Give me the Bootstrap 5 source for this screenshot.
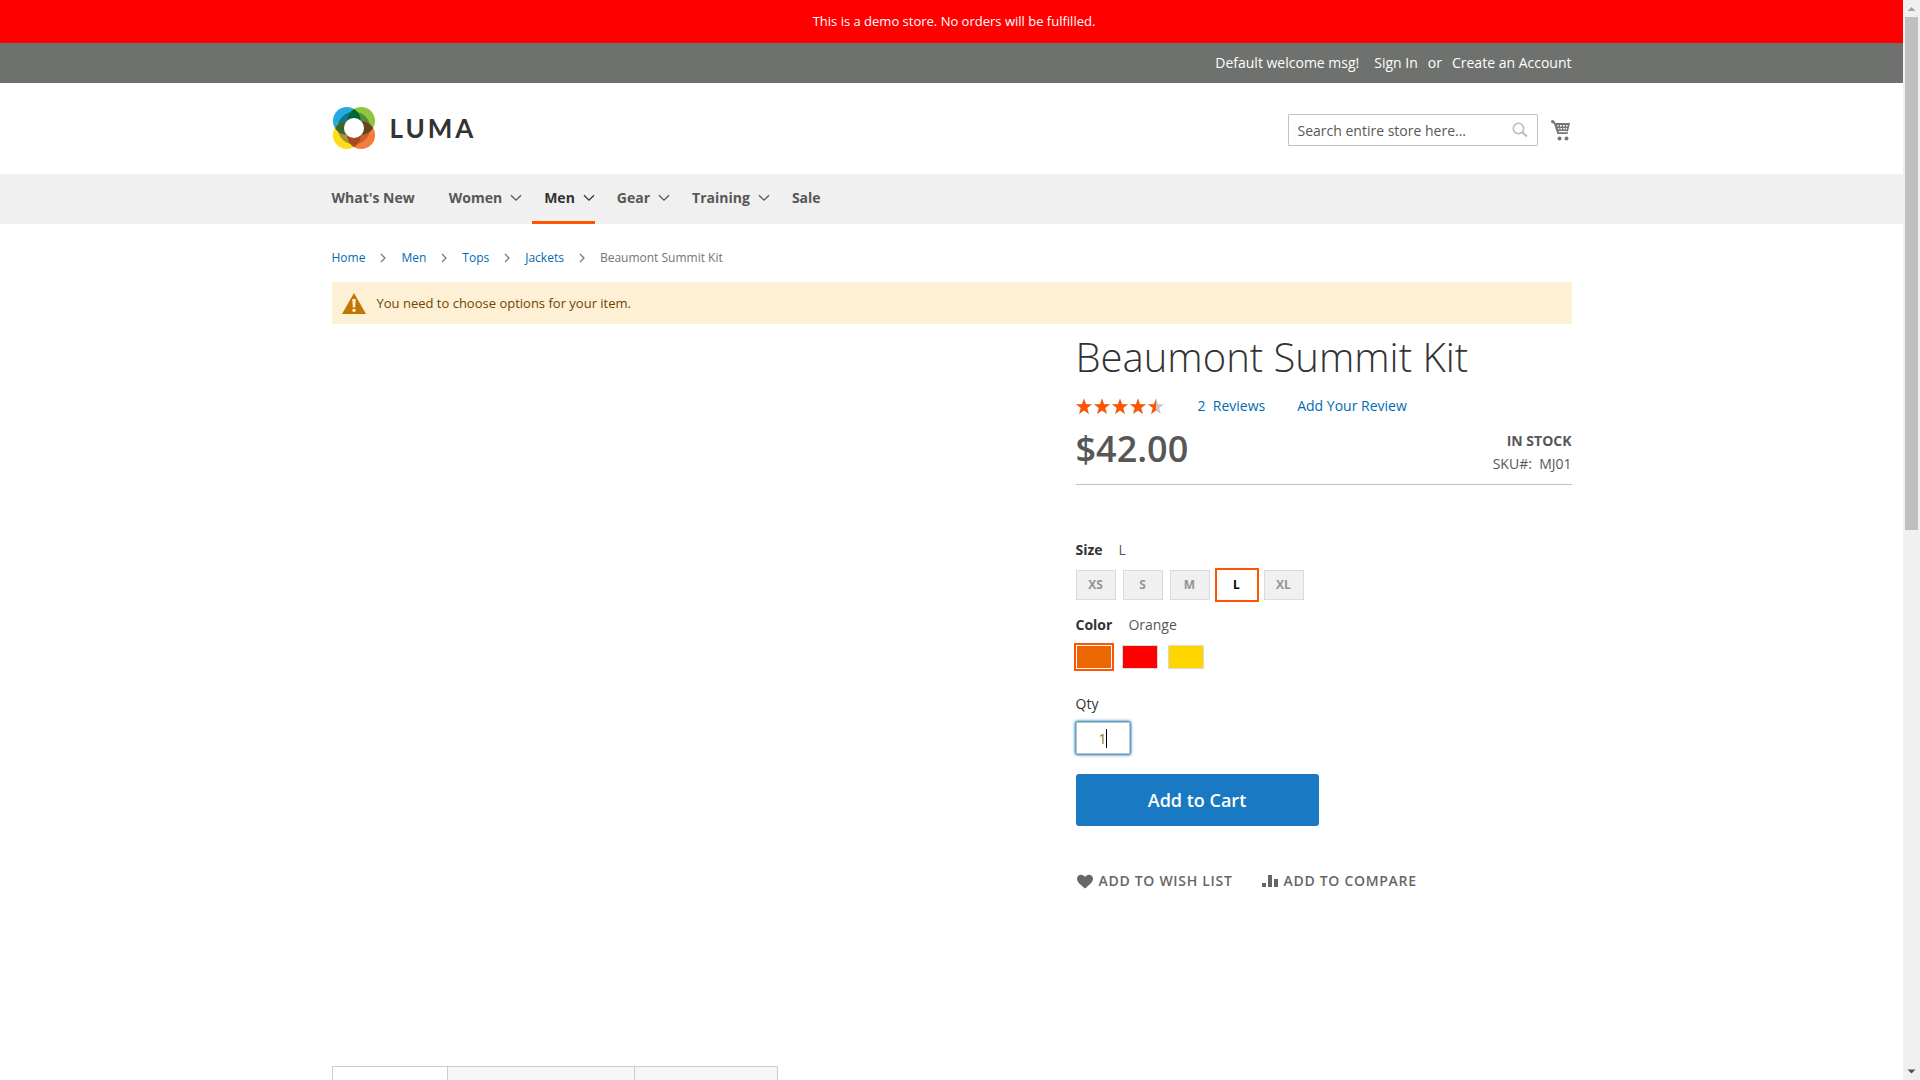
<!DOCTYPE html>
<html lang="en">
<head>
<meta charset="utf-8">
<meta name="viewport" content="width=device-width, initial-scale=1">
<title>Beaumont Summit Kit</title>
<link href="https://cdn.jsdelivr.net/npm/bootstrap@5.3.0/dist/css/bootstrap.min.css" rel="stylesheet">
<style>
body{font-family:"Open Sans","Noto Sans",sans-serif;font-size:14px;line-height:20px;color:#575757;background:#fff}
a{color:#006bb4;text-decoration:none}
.page-main{min-width:0;overflow:hidden}
.wrap{width:100%;max-width:1280px;margin:0 auto;padding:0 20px}
.demo-bar{background:#f00;color:#fff;font-size:13px;line-height:19px;padding:12px 0 12px 5px}
.account-bar{background:#6e716e;color:#fff;padding:10px 0}
.account-bar,.account-bar a{color:#fff}
.account-bar .wrap{gap:10px}
.welcome{margin-right:5px}
.site-head{padding:23px 0 20px}
.brand-word{font-family:Lato,sans-serif;font-weight:700;font-size:26px;line-height:32px;letter-spacing:3px;color:#333}
.brand-link{gap:14px}
.head-tools{gap:13px;padding-right:2px}
.search-box{width:250px}
.search-box input{height:32px;border:1px solid #c2c2c2;border-radius:1px;padding:0 35px 0 9px;font-size:14px;color:#575757}
.search-box input::placeholder{color:#575757;opacity:1}
.search-box button{right:10px;top:8px;line-height:0}
.main-nav{background:#f0f0f0}
.main-nav .nav{gap:10px;margin-left:-12px}
.main-nav a{display:flex;align-items:center;gap:8px;height:50px;padding:0 12px;color:#575757;font-weight:700;border-bottom:3px solid transparent}
.main-nav a.has-menu{padding-right:0}
.main-nav a.current{color:#333;border-color:#ff5501}
.crumbs{font-size:12px;line-height:18px;padding:25px 0 15px;color:#757575}
.crumbs svg{margin:0 15px}
.notice{background:#fdf0d5;color:#6f4400;font-size:13px;line-height:18px;padding:10px;gap:11px;height:42px}
.gallery{width:60%;min-height:702px}
.info{width:40%}
.info h1{font-weight:300;font-size:40px;line-height:44px;color:#333;margin:11px 0 17px}
.price{font-size:36px;line-height:36px;font-weight:600;padding-top:6px}
.price-row{border-bottom:1px solid #c1c1c1;padding:9px 0}
.stock{line-height:23px}
.choices{margin-top:55px}
.opt-name{font-weight:700;color:#333}
.opt-row{gap:7px;margin:10px 0 15px}
.size-opt{width:40px;height:30px;padding:0;border:1px solid #dadada;background:#f0f0f0;color:#949494;font-size:12px;line-height:20px;font-weight:700}
.size-opt.chosen{background:#fff;border-color:#fff;outline:2px solid #ff5501;color:#000}
.color-row{gap:10px;margin:10px 0 25px}
.color-opt{width:36px;height:24px;padding:0;border:1px solid #dadada}
.color-opt.chosen{border-color:#fff;outline:2px solid #ff5501}
.c-orange{background:#eb6703}.c-red{background:#f00}.c-yellow{background:#ffd500}
.qty-label{color:#333;font-weight:400}
.qty-box{width:54px;margin:8px 0 20px}
.qty-box input{height:32px;border:1px solid #c2c2c2;border-radius:1px;padding:0;text-align:center;font-size:14px;color:#8a6d1c;box-shadow:0 0 3px 1px #006bb4}
.caret{left:30px;top:7px;width:1px;height:19px;background:#000}
.add-cart{width:49%;height:52px;background:#1979c3;color:#fff;border:0;border-radius:3px;font-size:18px;font-weight:600}
.extras{margin-top:45px;gap:28px}
.extras a{gap:5px;color:#666;font-weight:600;letter-spacing:.05em}
.tab-strip{margin-top:40px}
.tab-strip button{height:40px;border:1px solid #ccc;border-right:0;background:#f6f6f6;padding:0}
.tab-strip button:first-child{width:115px;background:#fff}
.tab-strip button:nth-child(2){width:187px}
.tab-strip button:last-child{width:144px;border-right:1px solid #ccc}
.side-scroll{width:17px;background:#f0f0f0}
.side-scroll .rail{padding:0 2px}
.side-scroll .thumb{background:#bfbfbf}
</style>
<script src="https://cdn.jsdelivr.net/npm/bootstrap@5.3.0/dist/js/bootstrap.bundle.min.js"></script>
</head>
<body>
<svg class="d-none">
<symbol id="chev" viewBox="0 0 12 8"><path d="M1 1.200l5 5 5-5" fill="none" stroke="currentColor" stroke-width="1.300"/></symbol>
<symbol id="next" viewBox="0 0 6 10"><path d="M1 1l4 4-4 4" fill="none" stroke="currentColor" stroke-width="1.200"/></symbol>
</svg>
<div class="d-flex vh-100 overflow-hidden">
<div class="page-main flex-grow-1">
<div class="demo-bar text-center">This is a demo store. No orders will be fulfilled.</div>
<header>
<div class="account-bar"><div class="wrap d-flex justify-content-end"><span class="welcome">Default welcome msg!</span><a href="#">Sign In</a><span>or</span><a href="#">Create an Account</a></div></div>
<div class="site-head"><div class="wrap d-flex align-items-center justify-content-between">
<a href="#" class="brand-link d-flex align-items-center pb-1" aria-label="Luma home">
<svg width="44" height="44" viewBox="0 0 46 46">
<circle cx="15.500" cy="15.500" r="14.500" fill="#27a9e1"/><circle cx="30.500" cy="15.500" r="14.500" fill="#8dc63f"/><circle cx="15.500" cy="30.500" r="14.500" fill="#ffde17"/><circle cx="30.500" cy="30.500" r="14.500" fill="#f47b3c"/>
<clipPath id="k1"><circle cx="15.500" cy="15.500" r="14.500"/></clipPath><clipPath id="k2"><circle cx="30.500" cy="15.500" r="14.500"/></clipPath><clipPath id="k3"><circle cx="15.500" cy="30.500" r="14.500"/></clipPath><clipPath id="k4"><circle cx="30.500" cy="30.500" r="14.500"/></clipPath>
<circle cx="23" cy="23" r="17" fill="#0f729b" clip-path="url(#k1)"/><circle cx="23" cy="23" r="17" fill="#558b3c" clip-path="url(#k2)"/><circle cx="23" cy="23" r="17" fill="#a99334" clip-path="url(#k3)"/><circle cx="23" cy="23" r="17" fill="#c7602f" clip-path="url(#k4)"/>
<g clip-path="url(#k1)"><circle cx="30.500" cy="15.500" r="14.500" fill="#006838"/><circle cx="15.500" cy="30.500" r="14.500" fill="#3a662e"/></g>
<g clip-path="url(#k4)"><circle cx="30.500" cy="15.500" r="14.500" fill="#65451f"/><circle cx="15.500" cy="30.500" r="14.500" fill="#a34a21"/></g>
<circle cx="23" cy="23" r="10.500" fill="#fff"/></svg>
<span class="brand-word">LUMA</span></a>
<div class="head-tools d-flex align-items-center">
<form class="search-box position-relative" onsubmit="return false"><input class="form-control" type="text" placeholder="Search entire store here..." aria-label="Search"><button class="position-absolute border-0 bg-transparent p-0" type="submit" aria-label="Search"><svg width="16" height="16" viewBox="0 0 16 16" fill="none" stroke="#bdbdbd"><circle cx="6.500" cy="6.500" r="5.200" stroke-width="1.600"/><path d="M10.500 10.500l4.500 4" stroke-width="2.200"/></svg></button></form>
<a href="#" aria-label="Cart" class="lh-1"><svg width="19" height="21" viewBox="0 0 19 21"><path d="M0 1.500Q0 0 1.500 0Q3 0 3.500 1.500L4.300 3H19l-2 8.500-.5 2.500H6.500L3 4 1.500 3Q0 3 0 1.500z" fill="#757575"/><path d="M6 5h1.500v1.500H6.500zM9 5h1.700v1.500H9zM12 5h1.700v1.500H12zM15 5h1.500v1.500H15zM7 8h1.300v1.500H7.300zM9.500 8h1.500v1.500H9.500zM12.200 8h1.500v1.500h-1.500zM14.800 8h1.200v1.500h-1.200zM7.500 11h9v1.300H8z" fill="#fff"/><circle cx="8.500" cy="18.500" r="2" fill="#757575"/><circle cx="15.500" cy="18.500" r="2" fill="#757575"/></svg></a>
</div></div></div>
</header>
<nav class="main-nav"><div class="wrap"><div class="nav">
<a href="#">What's New</a>
<a href="#" class="has-menu">Women<svg width="12" height="8"><use href="#chev"/></svg></a>
<a href="#" class="has-menu current">Men<svg width="12" height="8"><use href="#chev"/></svg></a>
<a href="#" class="has-menu">Gear<svg width="12" height="8"><use href="#chev"/></svg></a>
<a href="#" class="has-menu">Training<svg width="12" height="8"><use href="#chev"/></svg></a>
<a href="#">Sale</a>
</div></div></nav>
<main class="wrap">
<nav class="crumbs d-flex align-items-center" aria-label="Breadcrumb"><a href="#">Home</a><svg width="6" height="10"><use href="#next"/></svg><a href="#">Men</a><svg width="6" height="10"><use href="#next"/></svg><a href="#">Tops</a><svg width="6" height="10"><use href="#next"/></svg><a href="#">Jackets</a><svg width="6" height="10"><use href="#next"/></svg><span>Beaumont Summit Kit</span></nav>
<div class="notice d-flex align-items-center" role="alert"><svg width="24" height="21" viewBox="0 0 24 21"><path d="M12 0l12 21H0z" fill="#c07600"/><path d="M10.300 6h3.400l-.5 8.500h-2.400zM10.500 16h3v2.700h-3z" fill="#fdf0d5"/></svg><span>You need to choose options for your item.</span></div>
<div class="d-flex">
<div class="gallery"></div>
<section class="info">
<h1>Beaumont Summit Kit</h1>
<div class="d-flex align-items-center">
<svg width="90" height="17" viewBox="0 0 90 17" role="img" aria-label="Rated 4.5 of 5"><defs><clipPath id="rated"><path d="M0 0h80v17H0z"/></clipPath><path id="star" d="M8 .5l2 5.700 6 .1-4.800 3.700 1.700 5.900L8 12.500l-4.900 3.400 1.700-5.900L0 6.300l6-.1z"/><g id="five"><use href="#star"/><use href="#star" x="18"/><use href="#star" x="36"/><use href="#star" x="54"/><use href="#star" x="72"/></g></defs><use href="#five" fill="#c7c7c7"/><use href="#five" fill="#ff5501" clip-path="url(#rated)"/></svg>
<a href="#" class="ms-4 ps-2">2&nbsp; Reviews</a><a href="#" class="ms-4 ps-2">Add Your Review</a></div>
<div class="price-row d-flex justify-content-between align-items-start"><div class="price">$42.00</div><div class="stock text-end pt-1"><b>IN STOCK</b><br>SKU#: &nbsp;MJ01</div></div>
<div class="choices">
<div><span class="opt-name me-3">Size</span><span>L</span></div>
<div class="opt-row d-flex"><button class="size-opt">XS</button><button class="size-opt">S</button><button class="size-opt">M</button><button class="size-opt chosen">L</button><button class="size-opt">XL</button></div>
<div><span class="opt-name me-3">Color</span><span>Orange</span></div>
<div class="color-row d-flex"><button class="color-opt c-orange chosen" aria-label="Orange"></button><button class="color-opt c-red" aria-label="Red"></button><button class="color-opt c-yellow" aria-label="Yellow"></button></div>
</div>
<label class="qty-label d-block" for="qty">Qty</label>
<div class="qty-box position-relative"><input class="form-control" id="qty" type="text" value="1"><span class="caret position-absolute"></span></div>
<button class="add-cart d-block">Add to Cart</button>
<div class="extras d-flex"><a href="#" class="d-flex align-items-center"><svg width="18" height="15" viewBox="0 0 18 15"><path d="M9 14.500C5 11 1 8.500 1 4.800 1 2.500 2.700.8 5 .8c1.700 0 3.200.9 4 2.300C9.800 1.700 11.300.8 13 .8c2.300 0 4 1.700 4 4C17 8.500 13 11 9 14.500z" fill="#666"/></svg>ADD TO WISH LIST</a><a href="#" class="d-flex align-items-center"><svg width="18" height="14" viewBox="0 0 18 14" fill="#666"><path d="M1 9h4v4H1zM7 1h4v12H7zM13 5h4v8h-4z"/></svg>ADD TO COMPARE</a></div>
</section>
</div>
<div class="tab-strip d-flex"><button aria-label="Details"></button><button aria-label="More Information"></button><button aria-label="Reviews"></button></div>
</main>
</div>
<div class="side-scroll d-flex flex-column flex-shrink-0" aria-hidden="true">
<svg width="17" height="17"><path d="M8.500 7l4 4h-8z" fill="#a3a3a3"/></svg>
<div class="rail flex-grow-1"><div class="thumb" style="height:49%"></div></div>
<svg width="17" height="17"><path d="M8.500 10.500l4-4h-8z" fill="#505050"/></svg>
</div>
</div>
</body>
</html>
